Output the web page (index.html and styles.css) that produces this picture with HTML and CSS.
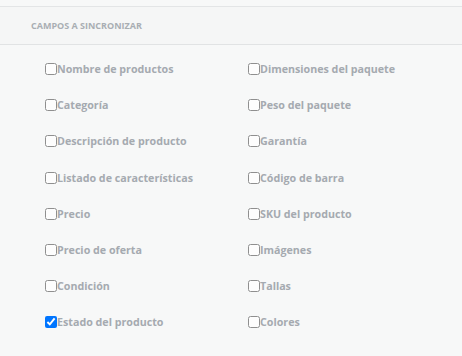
FILE: index.html
```html
<!DOCTYPE html>
<html>

<head>
  <meta name="viewport" content="width=device-width, initial-scale=1.0">
  <link rel="stylesheet" href="styles.css">
</head>

<body>
  <div class="panel">
    <div class="panel-head">Campos a sincronizar</div>
    <div class="panel-body">
      <label class="field"><input type="checkbox">Nombre de productos</label>
      <label class="field"><input type="checkbox">Dimensiones del paquete</label>
      <label class="field"><input type="checkbox">Categoría</label>
      <label class="field"><input type="checkbox">Peso del paquete</label>
      <label class="field"><input type="checkbox">Descripción de producto</label>
      <label class="field"><input type="checkbox">Garantía</label>
      <label class="field"><input type="checkbox">Listado de características</label>
      <label class="field"><input type="checkbox">Código de barra</label>
      <label class="field"><input type="checkbox">Precio</label>
      <label class="field"><input type="checkbox">SKU del producto</label>
      <label class="field"><input type="checkbox">Precio de oferta</label>
      <label class="field"><input type="checkbox">Imágenes</label>
      <label class="field"><input type="checkbox">Condición</label>
      <label class="field"><input type="checkbox">Tallas</label>
      <label class="field"><input type="checkbox" checked>Estado del producto</label>
      <label class="field"><input type="checkbox">Colores</label>
    </div>
  </div>
</body>

</html>
```

FILE: styles.css
```css
* {
  box-sizing: border-box;
}

body {
  margin: 0;
  background-color: #f7f8f8;
  font-family: "Open Sans", sans-serif;
}

.panel {
  margin-top: 6px;
  border-top: 1px solid #e3e5e6;
}

.panel-head {
  height: 38px;
  padding: 0 31px;
  display: flex;
  align-items: center;
  background-color: #f5f6f6;
  border-bottom: 1px solid #e1e3e4;
  font-size: 9px;
  font-weight: 700;
  text-transform: uppercase;
  color: #a9aeb3;
}

.panel-body {
  display: grid;
  grid-template-columns: 203px 203px;
  grid-auto-rows: 36.2px;
  padding: 6px 0 0 44px;
}

.field {
  display: flex;
  align-items: center;
  font-size: 10.7px;
  font-weight: 700;
  color: #a5aab0;
}

.field input {
  width: 12px;
  height: 12px;
  margin: 0 0 0 1px;
  opacity: 0.8;
}

.field input:checked {
  opacity: 1;
}
```
